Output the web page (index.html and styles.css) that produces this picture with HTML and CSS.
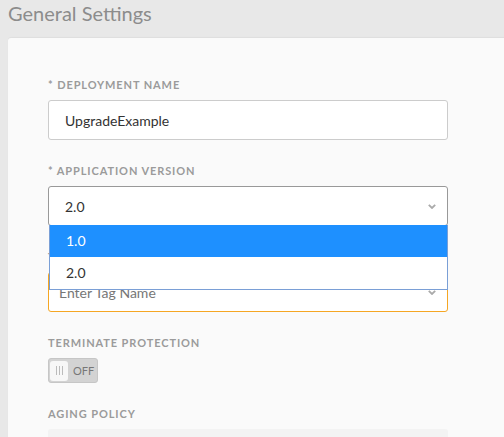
FILE: index.html
```html
<!DOCTYPE html>
<html>
<head>
<meta charset="utf-8">
<link rel="stylesheet" href="styles.css">
</head>
<body>
<div class="page">
  <h1 class="title">General Settings</h1>
  <div class="card">
    <div class="field">
      <label class="label">* Deployment Name</label>
      <div class="control input">UpgradeExample</div>
    </div>
    <div class="field dropdown-field">
      <label class="label">* Application Version</label>
      <div class="control select">
        <span>2.0</span>
        <svg class="chev" width="8" height="5" viewBox="0 0 8 5"><path d="M0.8 0.8 L4 4 L7.2 0.8" fill="none" stroke="#aaa" stroke-width="1.8"/></svg>
      </div>
      <ul class="menu">
        <li class="opt active">1.0</li>
        <li class="opt">2.0</li>
      </ul>
    </div>
    <div class="field">
      <label class="label">Tag</label>
      <div class="control select tag">
        <span class="ph">Enter Tag Name</span>
        <svg class="chev" width="8" height="5" viewBox="0 0 8 5"><path d="M0.8 0.8 L4 4 L7.2 0.8" fill="none" stroke="#aaa" stroke-width="1.8"/></svg>
      </div>
    </div>
    <div class="field">
      <label class="label">Terminate Protection</label>
      <div class="toggle">
        <span class="knob"><i></i><i></i><i></i></span>
        <span class="off">OFF</span>
      </div>
    </div>
    <div class="field">
      <label class="label">Aging Policy</label>
      <div class="box"></div>
    </div>
  </div>
</div>
</body>
</html>
```
FILE: styles.css
```css
html, body {
  margin: 0;
  padding: 0;
  background: #e8e8e8;
  overflow: hidden;
  font-family: Lato, "Open Sans", sans-serif;
}
.page {
  padding-left: 8px;
  width: 540px;
}
.title {
  margin: 0;
  height: 38px;
  font-size: 20px;
  font-weight: 400;
  color: #8c8c8c;
  line-height: 26px;
}
.card {
  background: #fafafa;
  border-top-left-radius: 3px;
  box-shadow: 0 -1px 1px rgba(0,0,0,0.04);
  padding: 40px 0 0 40px;
  height: 420px;
}
.field {
  width: 400px;
  margin-bottom: 24px;
  position: relative;
}
.label {
  display: block;
  font-size: 11px;
  line-height: 14px;
  font-weight: 700;
  letter-spacing: 0.9px;
  color: #9b9b9b;
  text-transform: uppercase;
  margin-bottom: 8px;
}
.control {
  box-sizing: border-box;
  height: 40px;
  border: 1px solid #ccc;
  border-radius: 3px;
  background: #fff;
  font-size: 14px;
  color: #333;
  display: flex;
  align-items: center;
  padding: 0 16px;
}
.select {
  justify-content: space-between;
  border-color: #999;
  padding-right: 11px;
}
.tag {
  border-color: #f5a623;
  padding-left: 10px;
}
.ph {
  color: #777;
}
.menu {
  position: absolute;
  left: 1px;
  right: 0;
  top: 61px;
  margin: 0;
  padding: 0;
  list-style: none;
  background: #fff;
  border: 1px solid #7a9fd6;
  border-top: none;
  z-index: 5;
}
.opt {
  height: 32px;
  line-height: 32px;
  padding-left: 16px;
  font-size: 14px;
  color: #333;
}
.opt.active {
  background: #1e90ff;
  color: #fff;
}
.toggle {
  box-sizing: border-box;
  width: 50px;
  height: 25px;
  background: #d3d3d3;
  border: 1px solid #c6c6c6;
  border-radius: 3px;
  display: flex;
  align-items: center;
  padding-left: 1px;
  gap: 5px;
}
.knob {
  box-sizing: border-box;
  width: 18px;
  height: 20px;
  background: #f7f7f7;
  border-radius: 3px;
  display: flex;
  justify-content: center;
  align-items: center;
  gap: 2px;
}
.knob i {
  width: 1px;
  height: 9px;
  background: #bbb;
}
.off {
  font-size: 11px;
  color: #777;
}
.box {
  height: 40px;
  background: #f3f3f3;
  border-radius: 3px;
}
```
